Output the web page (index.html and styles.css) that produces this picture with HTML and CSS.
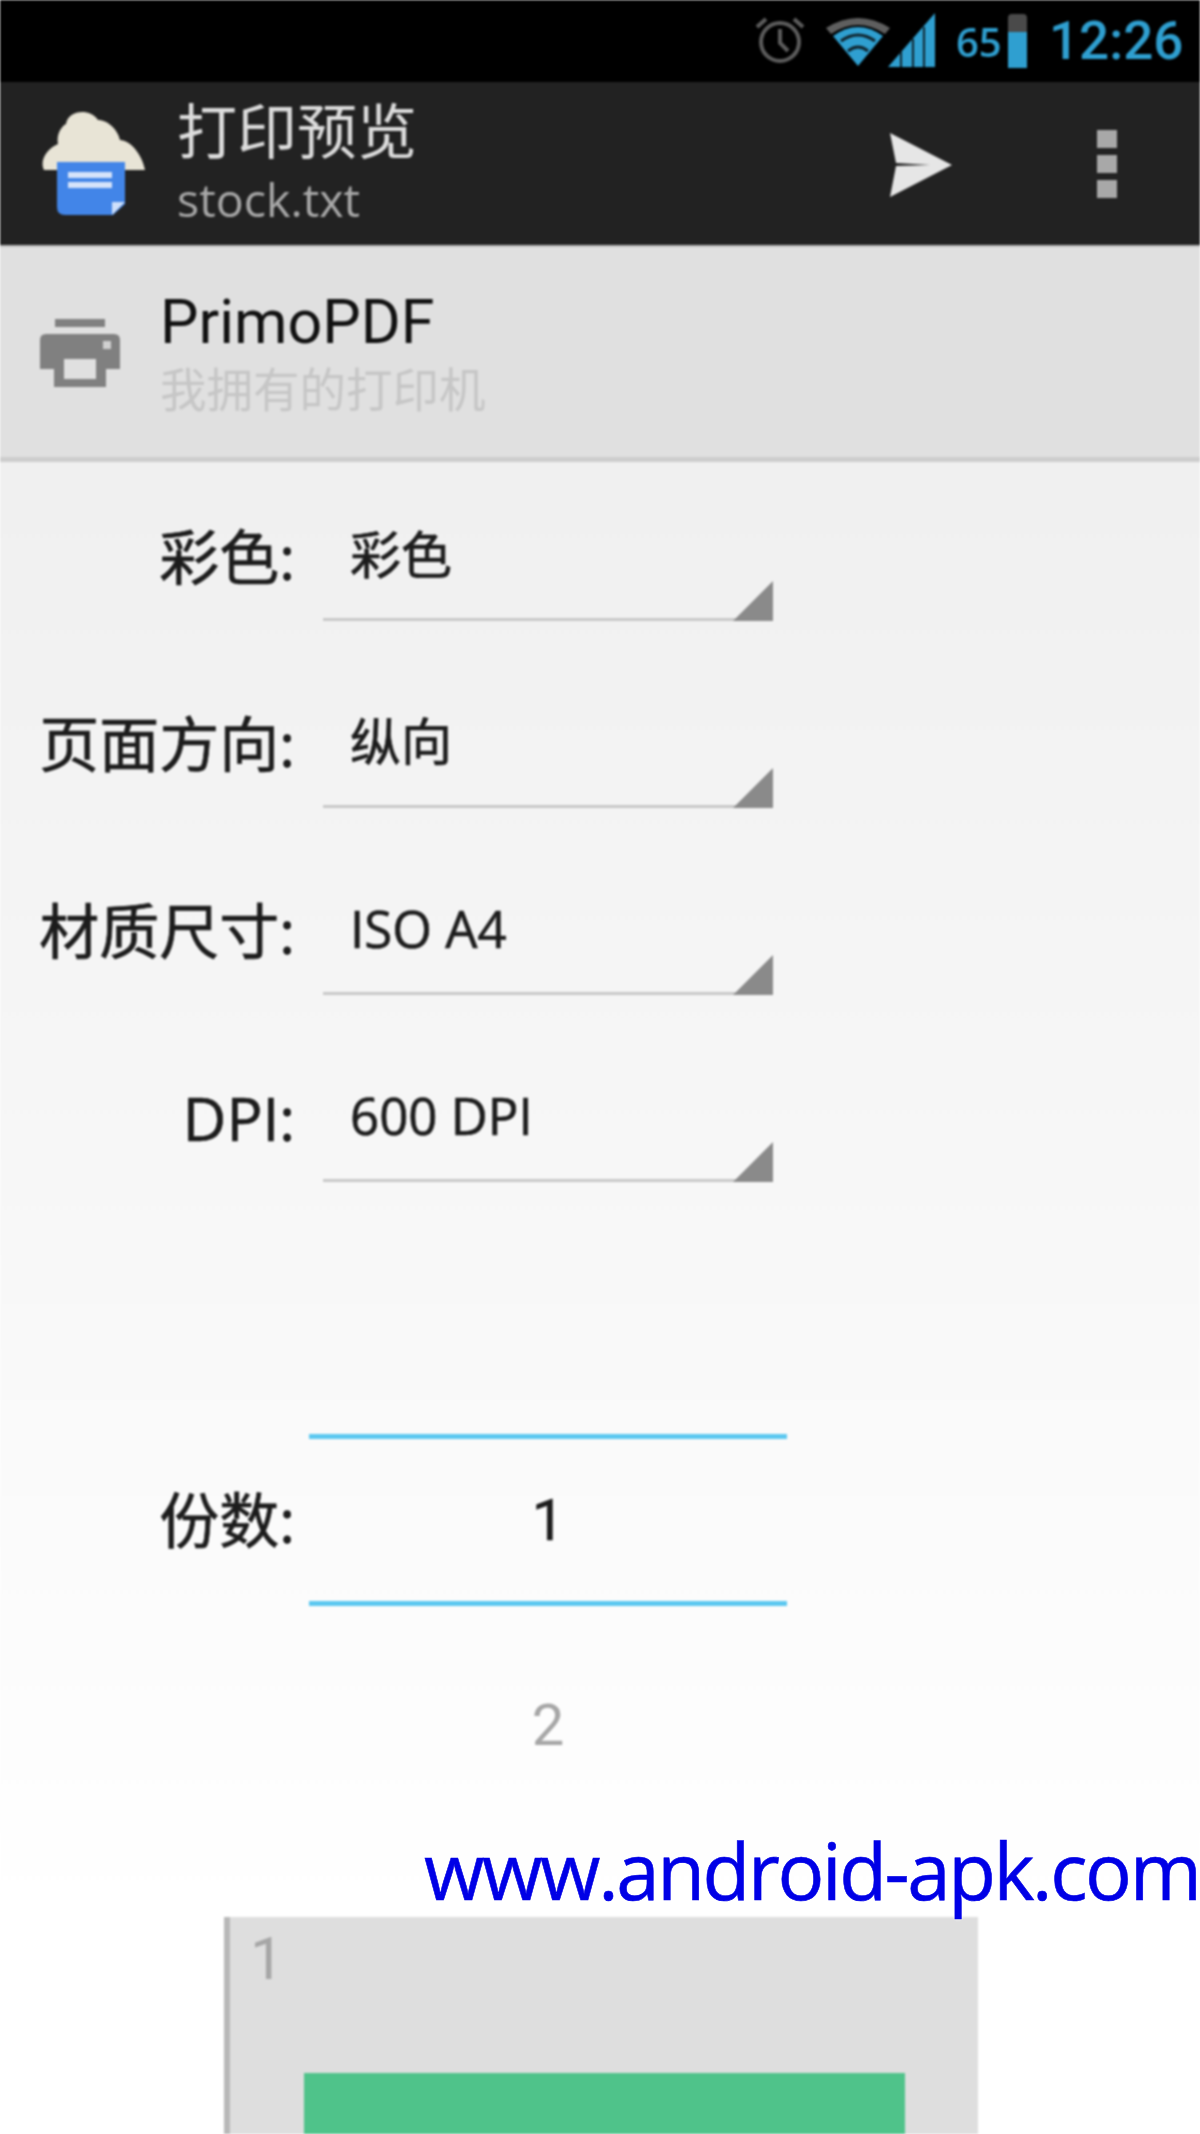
FILE: index.html
```html
<!DOCTYPE html>
<html lang="zh-CN">
<head>
  <meta charset="UTF-8">
  <title>打印预览</title>
  <link rel="stylesheet" href="styles.css">
</head>
<body>
  <div class="screen">
    <!-- status bar -->
    <div class="status-bar">
      <svg class="ic-alarm" viewBox="0 0 50 50" fill="none" stroke="#5c5c5c" stroke-width="4">
        <circle cx="25" cy="27" r="19"/>
        <path d="M25 14v14l8 8"/>
        <path d="M2 12l9-8M48 12l-9-8"/>
      </svg>
      <svg class="ic-wifi" viewBox="0 0 66 50">
        <path d="M1 12Q33-8 65 12L60 18Q33 0 6 18Z" fill="#5f5f5f"/>
        <path d="M8 20Q33 2 58 20L33 50Z" fill="#2f9fd0"/>
        <path d="M16 25Q33 13 50 25M23 35Q33 27 43 35" stroke="#10232c" stroke-width="3" fill="none"/>
      </svg>
      <svg class="ic-signal" viewBox="0 0 47 54">
        <path d="M0 54L47 0V54Z" fill="#2f9fd0"/>
        <path d="M13 54V38M25 54V26M36 54V14" stroke="#10232c" stroke-width="2"/>
      </svg>
      <span class="battery-pct">65</span>
      <div class="battery"><div class="battery-fill"></div></div>
      <span class="clock">12:26</span>
    </div>

    <!-- action bar -->
    <div class="action-bar">
      <svg class="app-icon" viewBox="0 0 104 104">
        <path d="M2 58C-3 48 6 36 16 32C14 22 20 14 24 12C26-2 48-4 56 8C66 8 76 18 78 28C88 28 100 42 103 58Z" fill="#e8e4d6"/>
        <path d="M15 50H83V92L71 103H23Q15 103 15 95Z" fill="#4285e8"/>
        <path d="M26 60H70V66H26ZM26 70H70V76H26Z" fill="#d5e3fa"/>
        <path d="M83 90L70 103V90Z" fill="#cfe0fa"/>
      </svg>
      <div class="title-block">
        <div class="title">打印预览</div>
        <div class="subtitle">stock.txt</div>
      </div>
      <svg class="ic-send" viewBox="0 0 62 64">
        <path d="M0 0L62 32L0 64L6 33L40 32L6 30Z" fill="#e6e6e6"/>
      </svg>
      <div class="overflow"><i></i><i></i><i></i></div>
    </div>

    <!-- printer row -->
    <div class="printer-row">
      <svg class="ic-printer" viewBox="0 0 80 70">
        <path d="M15 0H65V8H15Z" fill="#808080"/>
        <path d="M6 15H74Q80 15 80 21V50H66V68H14V50H0V21Q0 15 6 15Z" fill="#808080"/>
        <path d="M24 40H56V60H24Z" fill="#e0e0e0"/>
        <path d="M63 22H71V30H63Z" fill="#d0d0d0"/>
      </svg>
      <div>
        <div class="printer-name">PrimoPDF</div>
        <div class="printer-note">我拥有的打印机</div>
      </div>
    </div>

    <!-- options -->
    <div class="options">
      <div class="opt-row">
        <div class="opt-label">彩色:</div>
        <div class="spinner">彩色</div>
      </div>
      <div class="opt-row">
        <div class="opt-label">页面方向:</div>
        <div class="spinner">纵向</div>
      </div>
      <div class="opt-row">
        <div class="opt-label">材质尺寸:</div>
        <div class="spinner">ISO A4</div>
      </div>
      <div class="opt-row">
        <div class="opt-label">DPI:</div>
        <div class="spinner">600 DPI</div>
      </div>

      <div class="copies">
        <div class="opt-label">份数:</div>
        <div class="picker">1</div>
      </div>
      <div class="picker-next">2</div>
    </div>

    <!-- page preview -->
    <div class="page">
      <div class="page-no">1</div>
      <div class="page-block"></div>
    </div>
  </div>

  <div class="watermark">www.android-apk.com</div>
</body>
</html>
```

FILE: styles.css
```css
* { box-sizing: border-box; margin: 0; padding: 0; }
html, body {
  height: 2134px;
  overflow: hidden;
}
body {
  position: relative;
  font-family: Roboto, "Noto Sans CJK SC", sans-serif;
  background: #fff;
}
.screen {
  height: 2134px;
  display: flex;
  flex-direction: column;
  background: linear-gradient(#f0f0f0 462px, #ffffff 1900px);
  filter: blur(1px);
}

/* status bar */
.status-bar {
  height: 82px;
  flex: none;
  background: #000;
  display: flex;
  align-items: center;
  padding-left: 755px;
}
.ic-alarm { width: 50px; height: 50px; margin-top: -2px; }
.ic-wifi { width: 66px; height: 50px; margin-left: 20px; }
.ic-signal { width: 47px; height: 54px; margin-left: -3px; margin-top: -2px; }
.battery-pct {
  width: 48px;
  margin-left: 21px;
  font-family: "Open Sans", sans-serif;
  font-size: 40px;
  font-weight: 600;
  color: #2f9fd0;
}
.battery {
  width: 19px;
  height: 54px;
  margin-left: 4px;
  background: #4a4a4a;
  border-radius: 4px 4px 0 0;
  display: flex;
  align-items: flex-end;
}
.battery-fill {
  width: 100%;
  height: 36px;
  background: #2f9fd0;
}
.clock {
  margin-left: 22px;
  font-size: 53px;
  font-weight: 500;
  color: #2f9fd0;
  line-height: 1;
}

/* action bar */
.action-bar {
  height: 163px;
  flex: none;
  background: #222;
  display: flex;
  align-items: center;
  padding-left: 42px;
}
.app-icon { width: 104px; height: 104px; }
.title-block { margin-left: 31px; width: 713px; }
.title {
  font-size: 60px;
  line-height: 70px;
  margin-top: -4px;
  color: #dcdcdc;
}
.subtitle {
  font-family: "Open Sans", sans-serif;
  font-size: 46.5px;
  line-height: 52px;
  margin-top: 4px;
  color: #a8a8a8;
}
.ic-send { width: 62px; height: 64px; margin-top: 2px; }
.overflow {
  margin-left: 145px;
  display: flex;
  flex-direction: column;
  gap: 7px;
}
.overflow i {
  display: block;
  width: 20px;
  height: 18px;
  background: #a8a8a8;
}

/* printer row */
.printer-row {
  height: 217px;
  flex: none;
  background: #e0e0e0;
  border-top: 2px solid #bdbdbd;
  border-bottom: 5px solid #cdcdcd;
  display: flex;
  align-items: center;
  padding-left: 40px;
}
.ic-printer { width: 80px; height: 70px; margin-right: 40px; margin-top: 4px; }
.printer-name {
  font-size: 61px;
  line-height: 72px;
  color: #111;
}
.printer-note {
  margin-top: 5px;
  font-size: 46.5px;
  line-height: 56px;
  color: #c6c6c6;
}

/* options */
.options {
  flex: none;
  padding-top: 59px;
}
.opt-row {
  height: 100px;
  margin-bottom: 87px;
  display: flex;
}
.opt-label {
  width: 295px;
  flex: none;
  text-align: right;
  font-family: "Open Sans", "Noto Sans CJK SC", sans-serif;
  font-size: 60px;
  line-height: 72px;
  color: #1c1c1c;
  -webkit-text-stroke: 0.7px #1c1c1c;
}
.spinner {
  position: relative;
  width: 450px;
  margin-left: 28px;
  padding-left: 27px;
  padding-top: 3px;
  border-bottom: 3px solid #c8c8c8;
  font-family: "Open Sans", "Noto Sans CJK SC", sans-serif;
  font-size: 51px;
  line-height: 60px;
  color: #1c1c1c;
  -webkit-text-stroke: 0.7px #1c1c1c;
}
.spinner::after {
  content: "";
  position: absolute;
  right: 0;
  bottom: -3px;
  border-style: solid;
  border-width: 0 0 40px 40px;
  border-color: transparent transparent #8a8a8a transparent;
}
.copies {
  margin-top: 252px;
  display: flex;
  align-items: center;
}
.picker {
  width: 478px;
  height: 172px;
  margin-left: 14px;
  border-top: 5px solid #5cc8f0;
  border-bottom: 5px solid #5cc8f0;
  text-align: center;
  font-size: 58px;
  line-height: 162px;
  color: #1c1c1c;
  -webkit-text-stroke: 0.5px #1c1c1c;
}
.picker-next {
  width: 478px;
  margin-left: 309px;
  margin-top: 84px;
  text-align: center;
  font-size: 58px;
  line-height: 70px;
  color: #a6a6a6;
}

/* page preview */
.page {
  flex: 1;
  width: 754px;
  margin-top: 157px;
  margin-left: 224px;
  background: #dedede;
  border-left: 6px solid #b8b8b8;
  display: flex;
  flex-direction: column;
}
.page-no {
  padding-top: 6px;
  padding-left: 20px;
  font-size: 60px;
  line-height: 72px;
  color: #a6a6a6;
}
.page-block {
  flex: 1;
  margin-top: 78px;
  margin-left: 74px;
  width: 601px;
  background: #4fc38a;
}

/* site stamp over the shot */
.watermark {
  position: absolute;
  left: 424px;
  top: 1822px;
  font-family: "Open Sans", sans-serif;
  font-size: 78px;
  line-height: 96px;
  letter-spacing: -2.4px;
  white-space: nowrap;
  color: #0000e6;
  -webkit-text-stroke: 0.6px #0000e6;
  text-shadow: 0 0 3px #fff, 0 0 3px #fff;
}
```
